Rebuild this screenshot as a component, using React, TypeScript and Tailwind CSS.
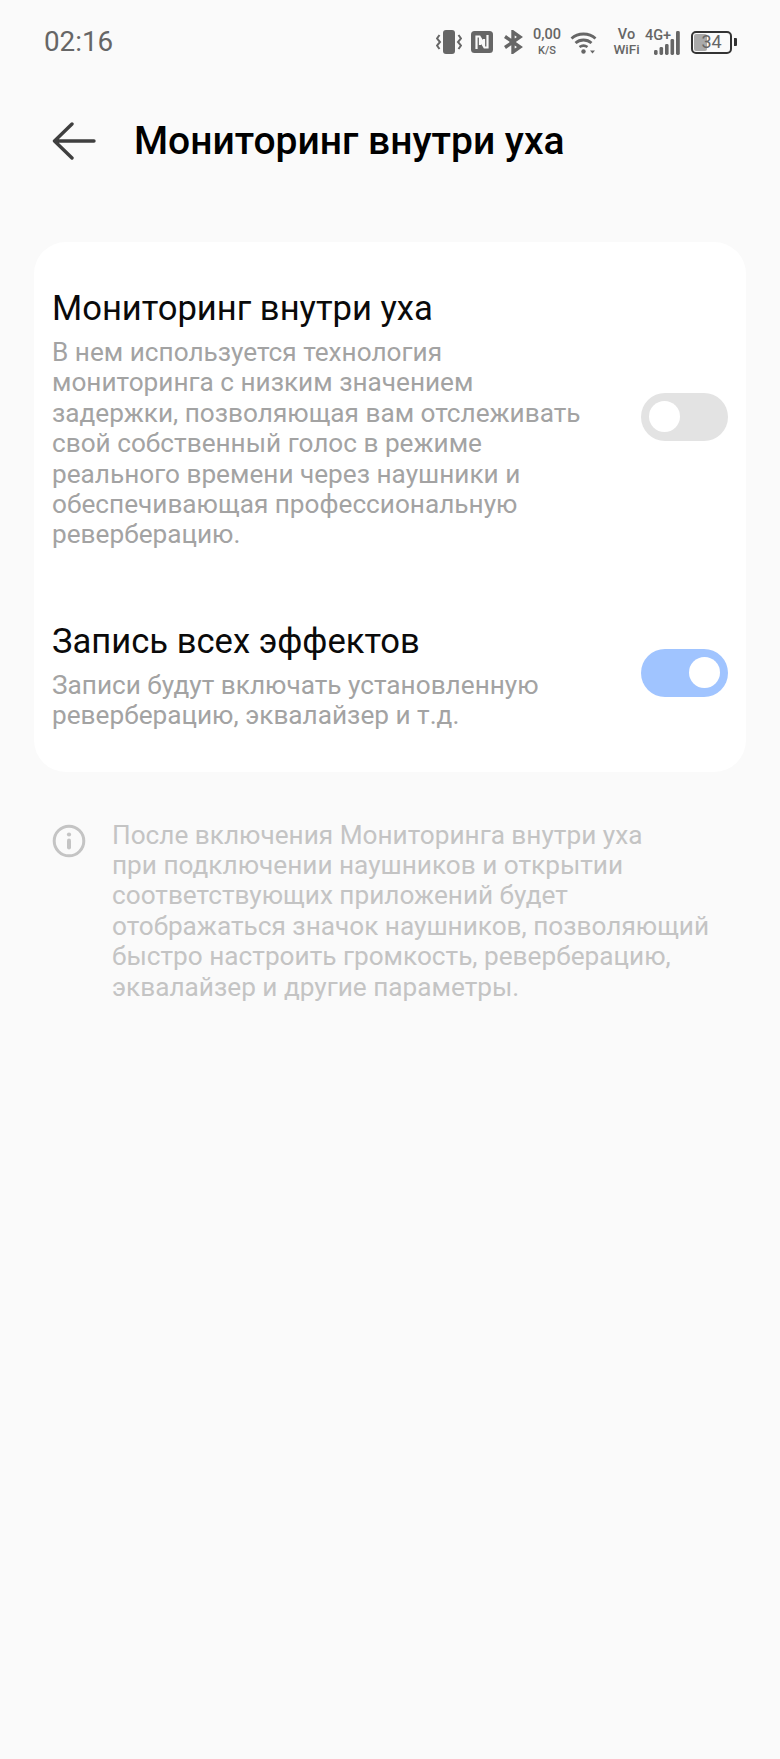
function VibrateIcon() {
  return (
    <svg width="26" height="24" viewBox="0 0 26 24" fill="none">
      <rect x="7" y="0" width="12" height="24" rx="3" fill="#666" />
      <path d="M3.5 5 L1 8.5 L4 12 L1 15.5 L3.5 19" stroke="#666" strokeWidth="2" />
      <path d="M22.5 5 L25 8.5 L22 12 L25 15.5 L22.5 19" stroke="#666" strokeWidth="2" />
    </svg>
  );
}

function NfcIcon() {
  return (
    <svg width="22" height="22" viewBox="0 0 22 22" fill="none">
      <rect width="22" height="22" rx="3.5" fill="#666" />
      <path d="M5.5 18 V5.5 H8.5 L13 13 V8" stroke="#fafafa" strokeWidth="2.2" />
      <path d="M16.5 4 V16.5 H13.5 L9 9 V14" stroke="#fafafa" strokeWidth="2.2" />
    </svg>
  );
}

function BluetoothIcon() {
  return (
    <svg width="20" height="24" viewBox="0 0 20 24" fill="none">
      <path d="M2 6.5 L17 17 L10 22 V2 L17 7 L2 17.5" stroke="#666" strokeWidth="3.4" />
    </svg>
  );
}

function WifiIcon() {
  return (
    <svg width="27" height="23" viewBox="0 0 27 23" fill="none">
      <path d="M1.5 7.5 C8 1.5 19 1.5 25.5 7.5" stroke="#666" strokeWidth="2.8" />
      <path d="M5.5 12 C10 8 17 8 21.5 12" stroke="#666" strokeWidth="2.8" />
      <path d="M9.5 16 C12 14.2 15 14.2 17.5 16" stroke="#666" strokeWidth="2.6" />
      <circle cx="13.5" cy="20.5" r="2.2" fill="#666" />
      <path d="M20 19.5h5l-2.5 3z" fill="#666" />
    </svg>
  );
}

function SignalBars() {
  return (
    <svg width="26" height="25" viewBox="0 0 26 25" fill="#666">
      <rect x="0" y="20" width="3.6" height="5" rx="1.4" />
      <rect x="5.5" y="17" width="3.6" height="8" rx="1.4" />
      <rect x="11" y="14" width="3.6" height="11" rx="1.4" />
      <rect x="16.5" y="9" width="3.6" height="16" rx="1.4" />
      <rect x="22" y="1" width="3.8" height="24" rx="1.4" />
    </svg>
  );
}

function Battery() {
  return (
    <div className="flex items-center gap-[2px]">
      <div className="relative flex h-[23px] w-[41px] items-center justify-center overflow-hidden rounded-[5px] border-2 border-[#333]">
        <div className="absolute inset-y-[1px] left-[1px] w-[13px] rounded-[2px] bg-[#aaa]" />
        <span className="relative text-[18px] leading-none text-[#666]">34</span>
      </div>
      <div className="h-[8px] w-[3px] rounded-r-[1px] bg-[#333]" />
    </div>
  );
}

function StatusBar() {
  return (
    <div className="flex h-[38px] items-center justify-between pl-[44px] pr-[43px] text-[#666]">
      <span className="text-[27.8px] leading-none">02:16</span>
      <div className="flex items-center">
        <VibrateIcon />
        <div className="ml-[9px]"><NfcIcon /></div>
        <div className="ml-[10px]"><BluetoothIcon /></div>
        <div className="ml-[10px] flex w-[28px] flex-col items-center font-medium leading-none">
          <span className="text-[14.5px]">0,00</span>
          <span className="mt-[2px] text-[11px]">K/S</span>
        </div>
        <div className="ml-[9px]"><WifiIcon /></div>
        <div className="ml-[16px] flex w-[27px] flex-col items-center font-medium leading-none">
          <span className="text-[14.5px]">Vo</span>
          <span className="mt-[1px] text-[13.5px]">WiFi</span>
        </div>
        <div className="relative ml-[5px] h-[26px] w-[35px]">
          <span className="absolute left-0 top-0 text-[14.5px] font-medium leading-none">4G+</span>
          <div className="absolute bottom-0 right-0"><SignalBars /></div>
        </div>
        <div className="ml-[11px]"><Battery /></div>
      </div>
    </div>
  );
}

function Toggle({ on }: { on: boolean }) {
  return (
    <div
      className={
        on
          ? 'mb-[6px] flex h-[48px] w-[87px] shrink-0 items-center justify-end rounded-full bg-[#a0c4ff] px-[8px]'
          : 'mb-[4px] flex h-[48px] w-[87px] shrink-0 items-center justify-start rounded-full bg-[#e3e3e3] px-[8px]'
      }
    >
      <div className="h-[31px] w-[31px] rounded-full bg-white" />
    </div>
  );
}

function SettingRow({ title, description, on }: { title: string; description: string[]; on: boolean }) {
  return (
    <div className="flex items-center justify-between">
      <div>
        <div className="text-[34.6px] leading-[40px] text-[#0a0a0a]">{title}</div>
        <div className="mt-[9px] text-[26.2px] leading-[30.4px] text-[#a3a3a3]">
          {description.map((line) => (
            <div key={line} className="whitespace-nowrap">{line}</div>
          ))}
        </div>
      </div>
      <Toggle on={on} />
    </div>
  );
}

export default function App() {
  return (
    <div className="min-h-[1759px] bg-[#fafafa] pt-[23px] font-['Roboto',sans-serif]">
      <StatusBar />

      {/* Header */}
      <div className="mt-[50px] flex h-[60px] items-center pl-[52px]">
        <svg width="44" height="38" viewBox="0 0 44 38" fill="none" className="shrink-0">
          <path d="M20 2 L2.5 19 L20 36 M3 19 H42" stroke="#3f3f3f" strokeWidth="3.4" strokeLinecap="round" strokeLinejoin="round" />
        </svg>
        <h1 className="ml-[38px] text-[39px] font-medium text-black">Мониторинг внутри уха</h1>
      </div>

      <div className="mx-[34px] mt-[71px] flex flex-col gap-[71px] rounded-[32px] bg-white pb-[41px] pl-[18px] pr-[18px] pt-[46px]">
        <SettingRow
          title="Мониторинг внутри уха"
          on={false}
          description={[
            'В нем используется технология',
            'мониторинга с низким значением',
            'задержки, позволяющая вам отслеживать',
            'свой собственный голос в режиме',
            'реального времени через наушники и',
            'обеспечивающая профессиональную',
            'реверберацию.',
          ]}
        />
        <SettingRow
          title="Запись всех эффектов"
          on={true}
          description={[
            'Записи будут включать установленную',
            'реверберацию, эквалайзер и т.д.',
          ]}
        />
      </div>

      {/* Info note */}
      <div className="mt-[48px] flex pl-[52px] pr-[34px]">
        <svg width="34" height="34" viewBox="0 0 34 34" fill="none" className="mt-[4px] shrink-0">
          <circle cx="17" cy="17" r="14.8" stroke="#c4c4c4" strokeWidth="3" />
          <circle cx="17" cy="10.5" r="2.1" fill="#c4c4c4" />
          <rect x="15" y="14.5" width="4" height="11" rx="2" fill="#c4c4c4" />
        </svg>
        <div className="ml-[26px] text-[26.2px] leading-[30.4px] text-[#c4c4c4]">
          <div className="whitespace-nowrap">После включения Мониторинга внутри уха</div>
          <div className="whitespace-nowrap">при подключении наушников и открытии</div>
          <div className="whitespace-nowrap">соответствующих приложений будет</div>
          <div className="whitespace-nowrap">отображаться значок наушников, позволяющий</div>
          <div className="whitespace-nowrap">быстро настроить громкость, реверберацию,</div>
          <div className="whitespace-nowrap">эквалайзер и другие параметры.</div>
        </div>
      </div>
    </div>
  );
}
